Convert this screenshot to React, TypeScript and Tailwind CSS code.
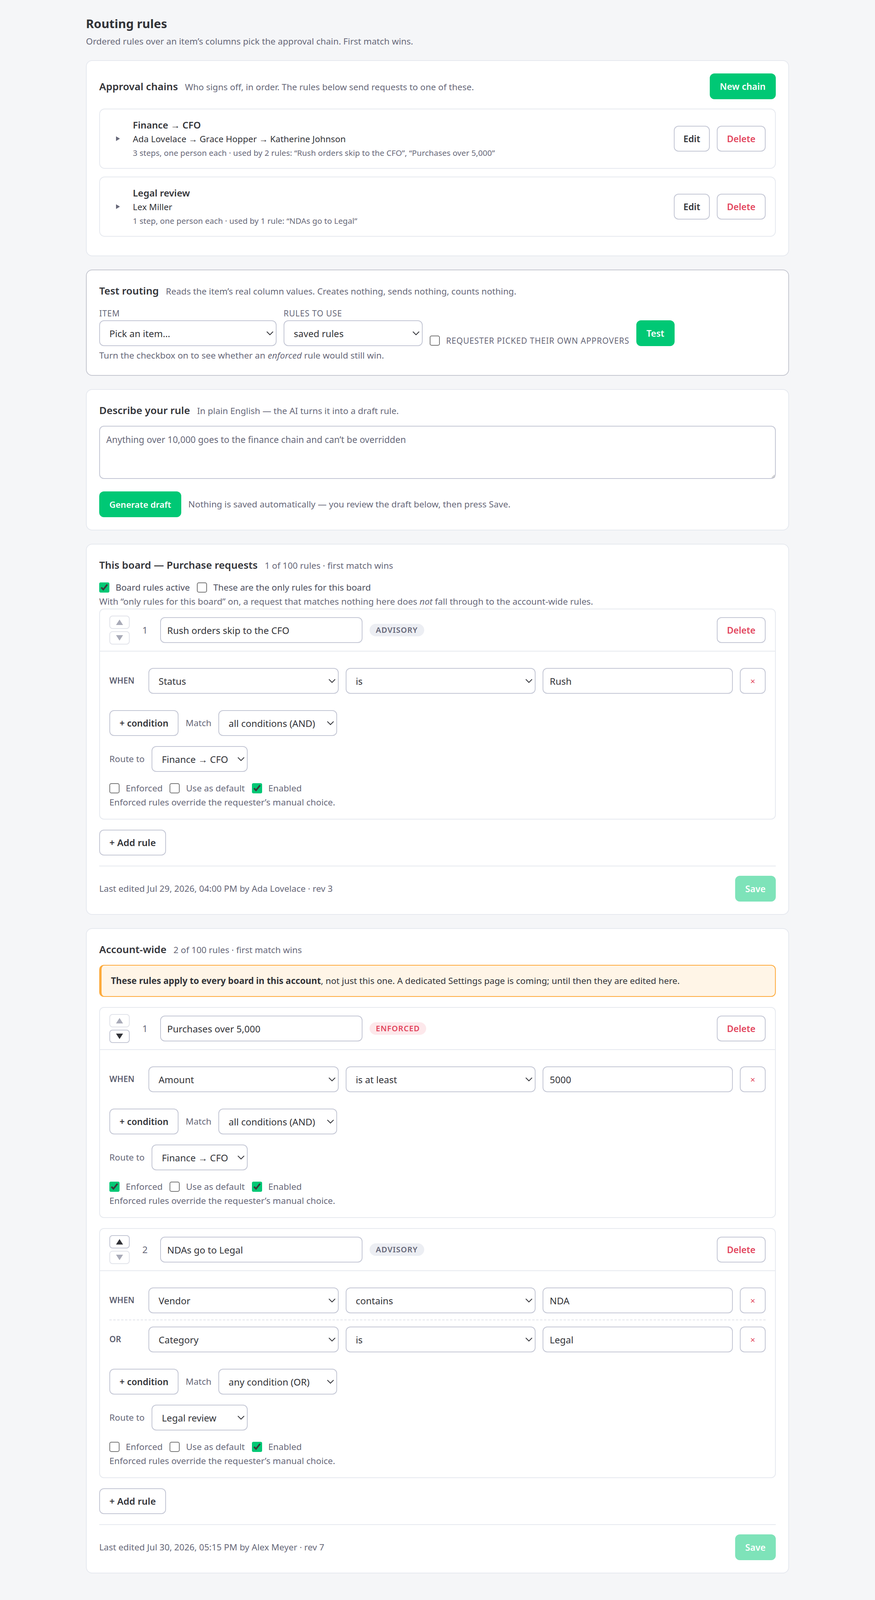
import React from 'react';

type Condition = { join: string; field: string; op: string; value: string };

type Rule = {
  id: number;
  name: string;
  enforced: boolean;
  useDefault: boolean;
  enabled: boolean;
  canUp: boolean;
  canDown: boolean;
  conditions: Condition[];
  match: string;
  route: string;
};

const fieldOptions = ['Status', 'Amount', 'Vendor', 'Category'];
const opOptions = ['is', 'is not', 'contains', 'is at least', 'is at most'];
const matchOptions = ['all conditions (AND)', 'any condition (OR)'];
const chainOptions = ['Finance → CFO', 'Legal review'];

const boardRules: Rule[] = [
  {
    id: 1,
    name: 'Rush orders skip to the CFO',
    enforced: false,
    useDefault: false,
    enabled: true,
    canUp: false,
    canDown: false,
    conditions: [{ join: 'WHEN', field: 'Status', op: 'is', value: 'Rush' }],
    match: 'all conditions (AND)',
    route: 'Finance → CFO',
  },
];

const accountRules: Rule[] = [
  {
    id: 1,
    name: 'Purchases over 5,000',
    enforced: true,
    useDefault: false,
    enabled: true,
    canUp: false,
    canDown: true,
    conditions: [{ join: 'WHEN', field: 'Amount', op: 'is at least', value: '5000' }],
    match: 'all conditions (AND)',
    route: 'Finance → CFO',
  },
  {
    id: 2,
    name: 'NDAs go to Legal',
    enforced: false,
    useDefault: false,
    enabled: true,
    canUp: true,
    canDown: false,
    conditions: [
      { join: 'WHEN', field: 'Vendor', op: 'contains', value: 'NDA' },
      { join: 'OR', field: 'Category', op: 'is', value: 'Legal' },
    ],
    match: 'any condition (OR)',
    route: 'Legal review',
  },
];

const chains = [
  {
    name: 'Finance → CFO',
    people: 'Ada Lovelace → Grace Hopper → Katherine Johnson',
    meta: '3 steps, one person each · used by 2 rules: “Rush orders skip to the CFO”, “Purchases over 5,000”',
  },
  {
    name: 'Legal review',
    people: 'Lex Miller',
    meta: '1 step, one person each · used by 1 rule: “NDAs go to Legal”',
  },
];

const fieldCls =
  'h-[33px] rounded-[6px] border border-[#c3c6d4] bg-white px-2 text-[12px] text-[#323338] outline-none';

const Button: React.FC<{
  variant?: 'outline' | 'danger' | 'primary' | 'muted';
  className?: string;
  children: React.ReactNode;
}> = ({ variant = 'outline', className = 'text-[11.5px]', children }) => {
  const look =
    variant === 'primary'
      ? 'border-[#00c875] bg-[#00c875] text-white'
      : variant === 'muted'
        ? 'border-[#00c875] bg-[#00c875] text-white opacity-50'
        : variant === 'danger'
          ? 'border-[#c3c6d4] bg-white text-[#e2445c]'
          : 'border-[#c3c6d4] bg-white text-[#323338]';
  return (
    <button
      type="button"
      className={`flex h-[33px] shrink-0 items-center justify-center rounded-[6px] border px-3 font-semibold whitespace-nowrap ${look} ${className}`}
    >
      {children}
    </button>
  );
};

const Select: React.FC<{ value: string; options: string[]; className?: string }> = ({
  value,
  options,
  className = '',
}) => (
  <select defaultValue={value} className={`${fieldCls} ${className}`}>
    {options.map((o) => (
      <option key={o}>{o}</option>
    ))}
  </select>
);

const Check: React.FC<{ checked?: boolean; label: string; className?: string }> = ({
  checked = false,
  label,
  className = 'text-[#676879]',
}) => (
  <label className={`flex items-center gap-[8px] text-[11.3px] leading-[18px] ${className}`}>
    <input type="checkbox" defaultChecked={checked} className="m-0 size-[13px] accent-[#00c875]" />
    {label}
  </label>
);

const SectionTitle: React.FC<{ title: string; note: string }> = ({ title, note }) => (
  <div className="flex items-baseline gap-[9px]">
    <h2 className="text-[13px] leading-[20px] font-semibold text-[#323338]">{title}</h2>
    <span className="text-[11.25px] text-[#676879]">{note}</span>
  </div>
);

const Arrow: React.FC<{ up?: boolean; enabled: boolean }> = ({ up = false, enabled }) => (
  <button
    type="button"
    className={`flex h-[17px] w-[26px] items-center justify-center rounded-[4px] border bg-white ${
      enabled ? 'border-[#c3c6d4] text-[#323338]' : 'border-[#e1e3ea] text-[#a9abb8]'
    }`}
  >
    <svg width="9" height="7" viewBox="0 0 9 7">
      {up ? <path d="M4.5 0L9 7H0z" fill="currentColor" /> : <path d="M0 0h9L4.5 7z" fill="currentColor" />}
    </svg>
  </button>
);

const RuleCard: React.FC<{ rule: Rule }> = ({ rule }) => (
  <div className="rounded-[6px] border border-[#e6e9ef] bg-white">
    <div className="flex items-center border-b border-[#e6e9ef] px-3 py-2">
      <div className="flex flex-col gap-[3px]">
        <Arrow up enabled={rule.canUp} />
        <Arrow enabled={rule.canDown} />
      </div>
      <span className="ml-[9px] w-[21px] text-center text-[12px] text-[#676879]">{rule.id}</span>
      <input defaultValue={rule.name} className={`${fieldCls} ml-[9px] w-[259px]`} />
      {rule.enforced ? (
        <span className="ml-[9px] flex h-[16px] items-center rounded-full bg-[#fde8eb] px-2 text-[10px] font-semibold tracking-[0.05em] text-[#e2445c]">
          ENFORCED
        </span>
      ) : (
        <span className="ml-[9px] flex h-[16px] items-center rounded-full bg-[#eceef3] px-2 text-[10px] font-semibold tracking-[0.05em] text-[#676879]">
          ADVISORY
        </span>
      )}
      <Button variant="danger" className="ml-auto text-[11.5px]">
        Delete
      </Button>
    </div>

    <div className="px-3 pt-[13px] pb-3">
      {rule.conditions.map((c, i) => (
        <div
          key={i}
          className={`flex items-center gap-[9px] py-2 ${
            i < rule.conditions.length - 1 ? 'border-b border-dashed border-[#e1e3ea]' : ''
          }`}
        >
          <span className="w-[41px] shrink-0 text-[10.5px] font-semibold text-[#5b5e6f]">{c.join}</span>
          <Select value={c.field} options={fieldOptions} className="min-w-0 flex-1" />
          <Select value={c.op} options={opOptions} className="min-w-0 flex-1" />
          <input defaultValue={c.value} className={`${fieldCls} min-w-0 flex-1`} />
          <button
            type="button"
            className="flex h-[33px] w-[33px] shrink-0 items-center justify-center rounded-[6px] border border-[#c3c6d4] bg-white text-[11px] text-[#e2445c]"
          >
            ×
          </button>
        </div>
      ))}

      <div className="mt-[13px] flex items-center gap-[9px]">
        <Button className="text-[11.5px]">+ condition</Button>
        <span className="text-[11.3px] text-[#676879]">Match</span>
        <Select value={rule.match} options={matchOptions} className="w-[152px]" />
      </div>

      <div className="mt-[13px] flex items-center gap-[9px]">
        <span className="text-[11.3px] text-[#676879]">Route to</span>
        <Select value={rule.route} options={chainOptions} className="w-[123px]" />
      </div>

      <div className="mt-3 flex items-center gap-[9px]">
        <Check checked={rule.enforced} label="Enforced" />
        <Check checked={rule.useDefault} label="Use as default" />
        <Check checked={rule.enabled} label="Enabled" />
      </div>
      <p className="text-[11.3px] leading-[18px] text-[#676879]">
        Enforced rules override the requester’s manual choice.
      </p>
    </div>
  </div>
);

const RulesFooter: React.FC<{ edited: string }> = ({ edited }) => (
  <>
    <Button className="mt-[13px] text-[12px]">+ Add rule</Button>
    <div className="mt-[13px] flex items-center justify-between border-t border-[#e6e9ef] pt-3">
      <span className="text-[11.3px] text-[#676879]">{edited}</span>
      <Button variant="muted">Save</Button>
    </div>
  </>
);

const Card: React.FC<{ className?: string; children: React.ReactNode }> = ({
  className = 'border-[#e6e9ef]',
  children,
}) => <section className={`rounded-[8px] border bg-white p-4 ${className}`}>{children}</section>;

export default function App() {
  return (
    <div className="min-h-screen bg-[#f5f6f8]">
      <div className="font-['Noto_Sans','Liberation_Sans',sans-serif] text-[#323338] [zoom:2]">
        <div className="mx-auto w-[900px] pt-[18px] pb-[64px]">
          <h1 className="text-[15.5px] leading-[24px] font-bold">Routing rules</h1>
          <p className="mt-[2px] text-[11.3px] leading-[18px] text-[#676879]">
            Ordered rules over an item’s columns pick the approval chain. First match wins.
          </p>

          <div className="mt-[15px] flex flex-col gap-[17px]">
            {/* Approval chains */}
            <Card>
              <div className="mb-3 flex items-center justify-between">
                <SectionTitle
                  title="Approval chains"
                  note="Who signs off, in order. The rules below send requests to one of these."
                />
                <Button variant="primary">New chain</Button>
              </div>
              <div className="flex flex-col gap-[10px] pb-2">
                {chains.map((c) => (
                  <div
                    key={c.name}
                    className="flex items-center rounded-[7px] border border-[#e6e9ef] px-3 py-[11px]"
                  >
                    <span className="flex w-[22px] justify-center text-[#676879]">
                      <svg width="5" height="6" viewBox="0 0 5 6">
                        <path d="M0 0L5 3L0 6z" fill="currentColor" />
                      </svg>
                    </span>
                    <div className="ml-2 min-w-0 flex-1">
                      <div className="text-[12px] leading-[18px] font-semibold">{c.name}</div>
                      <div className="text-[11.2px] leading-[18px]">{c.people}</div>
                      <div className="text-[10.3px] leading-[17px] text-[#676879]">{c.meta}</div>
                    </div>
                    <div className="flex gap-[9px]">
                      <Button className="w-[46px] text-[11.5px]">Edit</Button>
                      <Button variant="danger">Delete</Button>
                    </div>
                  </div>
                ))}
              </div>
            </Card>

            {/* Test routing */}
            <Card className="border-[#c5c7d0]">
              <SectionTitle
                title="Test routing"
                note="Reads the item’s real column values. Creates nothing, sends nothing, counts nothing."
              />
              <div className="mt-3 flex items-end gap-[9px]">
                <label className="flex flex-col">
                  <span className="mb-[2px] text-[10.5px] leading-[14px] tracking-[0.04em] text-[#676879] uppercase">
                    Item
                  </span>
                  <Select value="Pick an item…" options={['Pick an item…']} className="w-[227px]" />
                </label>
                <label className="flex flex-col">
                  <span className="mb-[2px] text-[10.5px] leading-[14px] tracking-[0.04em] text-[#676879] uppercase">
                    Rules to use
                  </span>
                  <Select value="saved rules" options={['saved rules', 'draft rules']} className="w-[178px]" />
                </label>
                <label className="flex items-center gap-[8px] text-[10.5px] leading-[14px] tracking-[0.04em] text-[#676879] uppercase">
                  <input type="checkbox" className="m-0 size-[13px] accent-[#00c875]" />
                  Requester picked their own approvers
                </label>
                <Button variant="primary">Test</Button>
              </div>
              <p className="mt-[3px] text-[11.3px] leading-[18px] text-[#676879]">
                Turn the checkbox on to see whether an <em>enforced</em> rule would still win.
              </p>
            </Card>

            {/* Describe your rule */}
            <Card>
              <SectionTitle title="Describe your rule" note="In plain English — the AI turns it into a draft rule." />
              <textarea
                placeholder="Anything over 10,000 goes to the finance chain and can’t be overridden"
                className="mt-[10px] block h-[68px] w-full rounded-[6px] border border-[#c3c6d4] bg-white px-2 py-[7px] text-[11.5px] leading-[19px] text-[#323338] outline-none placeholder:text-[#676879]"
              />
              <div className="mt-4 flex items-center gap-[9px]">
                <Button variant="primary" className="text-[11px]">
                  Generate draft
                </Button>
                <span className="text-[11.3px] text-[#676879]">
                  Nothing is saved automatically — you review the draft below, then press Save.
                </span>
              </div>
            </Card>

            {/* This board */}
            <Card>
              <SectionTitle title="This board — Purchase requests" note="1 of 100 rules · first match wins" />
              <div className="mt-[10px] flex items-center gap-[9px]">
                <Check checked label="Board rules active" className="text-[#4b4d5c]" />
                <Check label="These are the only rules for this board" className="text-[#4b4d5c]" />
              </div>
              <p className="text-[11.3px] leading-[18px] text-[#676879]">
                With “only rules for this board” on, a request that matches nothing here does <em>not</em> fall through
                to the account-wide rules.
              </p>
              <div className="flex flex-col gap-[13px]">
                {boardRules.map((r) => (
                  <RuleCard key={r.id} rule={r} />
                ))}
              </div>
              <RulesFooter edited="Last edited Jul 29, 2026, 04:00 PM by Ada Lovelace · rev 3" />
            </Card>

            {/* Account-wide */}
            <Card>
              <SectionTitle title="Account-wide" note="2 of 100 rules · first match wins" />
              <div className="mt-[10px] rounded-[6px] border border-l-[3px] border-[#fdab3d] bg-[#fff5e7] px-3 py-[10.5px] text-[11.3px] leading-[18px] text-[#323338]">
                <strong className="font-bold">These rules apply to every board in this account</strong>, not just this
                one. A dedicated Settings page is coming; until then they are edited here.
              </div>
              <div className="mt-[13px] flex flex-col gap-[13px]">
                {accountRules.map((r) => (
                  <RuleCard key={r.id} rule={r} />
                ))}
              </div>
              <RulesFooter edited="Last edited Jul 30, 2026, 05:15 PM by Alex Meyer · rev 7" />
            </Card>
          </div>
        </div>
      </div>
    </div>
  );
}
